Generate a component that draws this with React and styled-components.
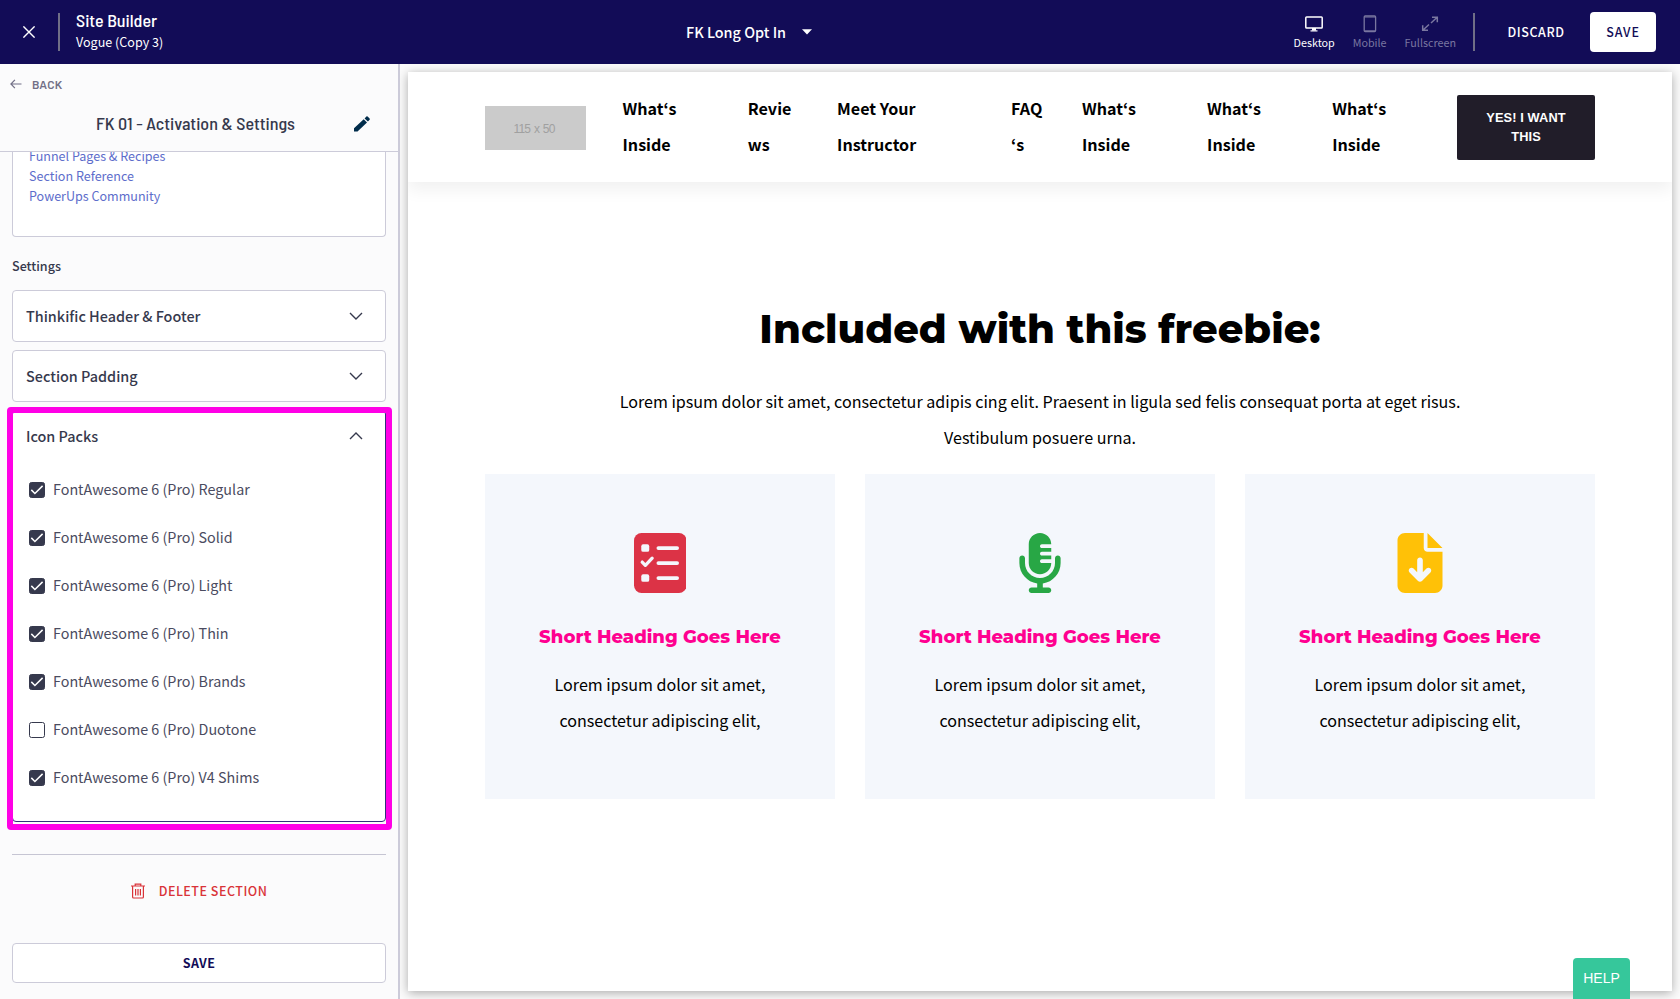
import React from "react";
import styled, { createGlobalStyle } from "styled-components";
import { FaMicrophoneLines, FaFileArrowDown } from "react-icons/fa6";

const sans = `"Noto Sans CJK KR", "Noto Sans", sans-serif`;
const condensed = `"Barlow", "Roboto", sans-serif`;
const semiCondensed = `"Barlow Semi Condensed", "Barlow", "Roboto", sans-serif`;
const display = `"Montserrat", "Inter", sans-serif`;

const GlobalStyle = createGlobalStyle`
  *, *::before, *::after { box-sizing: border-box; }
  body { margin: 0; overflow: hidden; font-family: ${sans}; color: #36394d; }
  button { font: inherit; border: 0; background: none; padding: 0; margin: 0; }
  h1, h2, h3, p, ul { margin: 0; padding: 0; }
  svg { display: block; flex: none; }
`;

const Page = styled.div`
  display: flex;
  flex-direction: column;
  width: 1680px;
  height: 999px;
  overflow: hidden;
  position: relative;
`;

/* ---------- top bar ---------- */
const TopBar = styled.header`
  height: 64px;
  flex: none;
  display: grid;
  grid-template-columns: 663px auto 1fr;
  align-items: center;
  background: #120c57;
  color: #fff;
  padding: 0 24px 0 23px;
`;
const TopLeft = styled.div`
  display: flex;
  align-items: center;
  gap: 23px;
`;
const Divider = styled.span`
  width: 2px;
  height: 38px;
  background: #706f87;
`;
const SiteName = styled.div`
  margin-left: -7px;
  padding-bottom: 3px;
  display: flex;
  flex-direction: column;
`;
const SiteTitle = styled.h1`
  font: 500 18px/20px ${semiCondensed};
  padding-bottom: 2px;
`;
const SiteCopy = styled.span`
  font-size: 12.55px;
  line-height: 20px;
`;
const PagePicker = styled.button`
  display: flex;
  align-items: center;
  gap: 16px;
  color: #fff;
  font-size: 14.4px;
  font-weight: 500;
  line-height: 24px;
`;
const TopRight = styled.div`
  display: flex;
  align-items: center;
  justify-content: flex-end;
`;
const DeviceTab = styled.button`
  display: flex;
  flex-direction: column;
  align-items: center;
  color: ${(p) => (p.$active ? "#fff" : "#7a77a0")};
  font-size: 10.75px;
  line-height: 16px;
  padding-top: 2px;
  margin-right: 18px;
  &:last-of-type { margin-right: 0; }
  svg { height: 18px; margin-bottom: 2px; }
`;
const DeviceTabs = styled.div`
  display: flex;
  margin-right: 17px;
`;
const BarButton = styled.button`
  height: 40px;
  padding-bottom: 1px;
  border-radius: 4px;
  font-size: 12.5px;
  font-weight: 500;
  letter-spacing: ${(p) => (p.$solid ? "0.9px" : "0.6px")};
  color: ${(p) => (p.$solid ? "#120c57" : "#fff")};
  background: ${(p) => (p.$solid ? "#fff" : "transparent")};
  width: ${(p) => (p.$solid ? "66px" : "58px")};
  margin-left: ${(p) => (p.$solid ? "25px" : "32px")};
`;

/* ---------- sidebar ---------- */
const Body = styled.div`
  display: flex;
  flex: 1;
  min-height: 0;
`;
const Sidebar = styled.aside`
  width: 400px;
  flex: none;
  display: flex;
  flex-direction: column;
  background: #fbfbfc;
  border-right: 2px solid #cccbd9;
  position: relative;
`;
const SideHead = styled.div`
  height: 88px;
  flex: none;
  border-bottom: 1px solid #cccbd9;
`;
const BackLink = styled.button`
  display: flex;
  align-items: center;
  gap: 10px;
  padding: 11px 0 0 10px;
  font: 600 12px/18px ${condensed};
  letter-spacing: 0.25px;
  color: #716f86;
`;
const SectionTitleRow = styled.div`
  display: flex;
  align-items: center;
  justify-content: space-between;
  padding: 19px 28px 0 96px;
`;
const SectionTitle = styled.h2`
  font: 500 18px/22px ${semiCondensed};
  padding-bottom: 2px;
  white-space: nowrap;
`;
const SideScroll = styled.div`
  flex: 1;
  min-height: 0;
  overflow: hidden;
  padding: 0 12px;
  display: flex;
  flex-direction: column;
`;
const LinkBox = styled.div`
  height: 85px;
  flex: none;
  background: #fff;
  border: 1px solid #cccbd9;
  border-top: 0;
  border-radius: 0 0 4px 4px;
  padding: 0 16px;
  overflow: hidden;
`;
const LinkList = styled.ul`
  list-style: none;
  margin-top: -6px;
`;
const LinkItem = styled.li`
  font-size: 12.55px;
  line-height: 20px;
  color: #5d6dcb;
`;
const GroupLabel = styled.h3`
  font-size: 12.55px;
  font-weight: 500;
  line-height: 20px;
  margin: 19px 0 14px;
`;
const Accordion = styled.section`
  flex: none;
  height: ${(p) => (p.$open ? "412px" : "52px")};
  background: #fff;
  border: 1px solid ${(p) => (p.$open ? "#312f7c" : "#cccbd9")};
  border-radius: 4px;
  margin-bottom: 8px;
`;
const AccordionHead = styled.div`
  height: 50px;
  display: flex;
  align-items: center;
  justify-content: space-between;
  padding: 0 22px 1px 13px;
  font-size: 14.4px;
  font-weight: 500;
`;
const CheckList = styled.div`
  padding: 5px 0 0 16px;
`;
const CheckRow = styled.label`
  height: 48px;
  display: flex;
  align-items: center;
  gap: 8px;
  font-size: 14.33px;
  color: #4a4b60;
`;
const CheckLabel = styled.span`
  line-height: 20px;
  padding-bottom: 3px;
`;
const CheckBox = styled.span`
  width: 16px;
  height: 16px;
  border-radius: 2.5px;
  border: 1px solid #36394d;
  background: ${(p) => (p.$checked ? "#36394d" : "#fff")};
  display: flex;
  align-items: center;
  justify-content: center;
`;
const Highlight = styled.div`
  position: absolute;
  left: 7px;
  top: 343px;
  width: 385px;
  height: 423px;
  border: 6px solid #ff00e6;
  border-radius: 4px;
  pointer-events: none;
`;
const Rule = styled.hr`
  flex: none;
  width: 100%;
  height: 1px;
  border: 0;
  margin: 24px 0 0;
  background: #c6c5d3;
`;
const DeleteButton = styled.button`
  display: flex;
  align-items: center;
  justify-content: center;
  gap: 14px;
  height: 40px;
  margin-top: 16px;
  padding-bottom: 1px;
  color: #d93338;
  font-size: 12.5px;
  font-weight: 500;
  letter-spacing: 0.5px;
`;
const SideSave = styled.button`
  flex: none;
  height: 40px;
  margin-top: 32px;
  padding-bottom: 1px;
  background: #fff;
  border: 1px solid #cccbd9;
  border-radius: 4px;
  color: #120c57;
  font-size: 12.5px;
  font-weight: 700;
  letter-spacing: 0.4px;
`;

/* ---------- preview ---------- */
const Stage = styled.main`
  flex: 1;
  padding: 8px;
  background: #fbfbfb;
  overflow: hidden;
`;
const Frame = styled.div`
  height: 919px;
  background: #fff;
  box-shadow: 0 2px 10px rgba(0, 0, 0, 0.32);
  color: #000;
`;
const SiteNav = styled.nav`
  height: 110px;
  display: flex;
  align-items: center;
  padding: 0 77px;
  background: #fff;
  box-shadow: 0 8px 16px rgba(0, 0, 0, 0.06);
  clip-path: inset(0 0 -30px 0);
`;
const LogoPlaceholder = styled.div`
  width: 101px;
  height: 44px;
  margin: 2px 36.5px 0 0;
  padding-right: 3px;
  background: #cbcbcb;
  color: #a0a0a0;
  font: 12px/47px "Liberation Sans", Arial, sans-serif;
  letter-spacing: -0.8px;
  word-spacing: 1.2px;
  text-align: center;
`;
const NavItem = styled.a`
  width: ${(p) => p.$w}px;
  padding-bottom: 2px;
  font-size: 16.1px;
  font-weight: 700;
  line-height: 36px;
  white-space: pre;
`;
const CallToAction = styled.button`
  width: 138px;
  height: 65px;
  margin-left: auto;
  border-radius: 2px;
  background: #211d29;
  color: #fff;
  font: 700 12.8px/19px "Liberation Sans", Arial, sans-serif;
  letter-spacing: 0.1px;
`;
const Hero = styled.section`
  padding: 123px 77px 0;
  text-align: center;
`;
const HeroTitle = styled.h1`
  font: 800 40px/48px ${display};
  white-space: nowrap;
`;
const BodyText = styled.p`
  font-size: 16.1px;
  line-height: 36px;
  white-space: pre-line;
`;
const Intro = styled(BodyText)`
  margin: 30px 0 19px;
`;
const Cards = styled.div`
  display: grid;
  grid-template-columns: repeat(3, 350px);
  gap: 30px;
`;
const Card = styled.article`
  height: 325px;
  padding-top: 59.4px;
  background: #f4f7fc;
  display: flex;
  flex-direction: column;
  align-items: center;
`;
const CardIcon = styled.div`
  height: 60px;
  color: ${(p) => p.$color};
  svg { height: 60px; width: auto; }
`;
const CardTitle = styled.h2`
  font: 800 18px/24px ${display};
  color: #ff0090;
  margin: 31.6px 0 17px;
`;
const HelpTab = styled.button`
  position: absolute;
  right: 50px;
  bottom: 0;
  width: 57px;
  height: 41px;
  border-radius: 4px 4px 0 0;
  background: #36c79b;
  color: #fff;
  font: 14px/39px "Liberation Sans", Arial, sans-serif;
`;

/* ---------- icons ---------- */
const CloseIcon = () => (
  <svg width="12" height="12" viewBox="0 0 12 12" fill="none" stroke="#fff" strokeWidth="1.4">
    <path d="M.4.4l11.2 11.2M11.6.4L.4 11.6" />
  </svg>
);
const CaretIcon = () => (
  <svg width="10" height="6" viewBox="0 0 10 6" fill="#fff">
    <path d="M0 .3h10L5 5.6z" />
  </svg>
);
const DesktopIcon = () => (
  <svg width="18" height="18" viewBox="0 0 18 18" fill="none" stroke="currentColor">
    <rect x=".8" y="2" width="16.4" height="11" rx=".8" strokeWidth="1.5" />
    <path d="M9 13v2.6" strokeWidth="4" />
    <path d="M5.5 15.9h7" strokeWidth="1.2" />
  </svg>
);
const MobileIcon = () => (
  <svg width="14" height="18" viewBox="0 0 14 18" fill="none" stroke="currentColor">
    <rect x="1.2" y="1" width="11.4" height="15.6" rx="1" strokeWidth="1.3" />
    <path d="M1.5 2.1h11M1.5 15.7h11" strokeWidth=".9" />
  </svg>
);
const FullscreenIcon = () => (
  <svg width="18" height="18" viewBox="0 0 18 18" fill="none" stroke="currentColor" strokeWidth="1.5">
    <path d="M11 2.2h5.3v5M16.2 2.3L10 8M7 15.3H1.7v-5M1.8 15.2L8 9.5" />
  </svg>
);
const BackIcon = () => (
  <svg width="12" height="10" viewBox="0 0 12 10" fill="none" stroke="#716f86" strokeWidth="1.2">
    <path d="M.8 5H11.5M4.9.8L.9 5l4 4.2" />
  </svg>
);
const PencilIcon = () => (
  <svg width="16" height="16" viewBox="0 0 16 16" fill="#002c4b">
    <path d="M0 12.2L9.7 3.2 13 6.4 3.5 15.6H0zM10.6 2.4L12.4.6q.6-.6 1.2 0l2 2q.5.6 0 1.2L13.9 5.5z" />
  </svg>
);
const Chevron = ({ up }) => (
  <svg width="14" height="8" viewBox="0 0 14 8" fill="none" stroke="#36394d" strokeWidth="1.4">
    <path d={up ? "M1 7l6-6 6 6" : "M1 1l6 6 6-6"} />
  </svg>
);
const CheckIcon = () => (
  <svg width="14" height="14" viewBox="0 0 14 14" fill="none" stroke="#fff" strokeWidth="1.5">
    <path d="M1.3 6.9l3.6 3.6 7.7-7.6" />
  </svg>
);
const TrashIcon = () => (
  <svg width="14" height="16" viewBox="0 0 14 16" fill="none" stroke="#d93338" strokeWidth="1.2">
    <path d="M0 3h14M4.2 3V1.2h5.6V3M1.6 3v11q0 1 1 1h8.8q1 0 1-1V3M4.6 6v6.4M7 6v6.4M9.4 6v6.4" />
  </svg>
);
const ChecklistIcon = () => (
  <svg viewBox="0 0 448 512">
    <rect width="448" height="512" rx="64" fill="currentColor" />
    <g fill="#f4f7fc">
      <rect x="62" y="97" width="68" height="64" rx="16" />
      <rect x="62" y="352" width="68" height="64" rx="16" />
      <rect x="192" y="112" width="192" height="32" rx="16" />
      <rect x="192" y="240" width="192" height="32" rx="16" />
      <rect x="192" y="368" width="192" height="32" rx="16" />
    </g>
    <path d="M70 248l27 28 58-61" fill="none" stroke="#f4f7fc" strokeWidth="28" strokeLinecap="round" strokeLinejoin="round" />
  </svg>
);

/* ---------- data ---------- */
const links = ["Funnel Pages & Recipes", "Section Reference", "PowerUps Community"];
const packs = [
  ["Regular", true],
  ["Solid", true],
  ["Light", true],
  ["Thin", true],
  ["Brands", true],
  ["Duotone", false],
  ["V4 Shims", true],
];
const navItems = [
  ["What‘s\nInside", 125.3],
  ["Revie\nws", 89.3],
  ["Meet Your\nInstructor", 174],
  ["FAQ\n‘s", 70.9],
  ["What‘s\nInside", 125.1],
  ["What‘s\nInside", 125.1],
  ["What‘s\nInside", 110],
];
const cards = [
  [ChecklistIcon, "#dc3346"],
  [FaMicrophoneLines, "#28a745"],
  [FaFileArrowDown, "#ffc107"],
];

export default function App() {
  return (
    <Page>
      <GlobalStyle />
      <TopBar>
        <TopLeft>
          <CloseIcon />
          <Divider />
          <SiteName>
            <SiteTitle>Site Builder</SiteTitle>
            <SiteCopy>Vogue (Copy 3)</SiteCopy>
          </SiteName>
        </TopLeft>
        <PagePicker>
          FK Long Opt In
          <CaretIcon />
        </PagePicker>
        <TopRight>
          <DeviceTabs>
            <DeviceTab $active><DesktopIcon />Desktop</DeviceTab>
            <DeviceTab><MobileIcon />Mobile</DeviceTab>
            <DeviceTab><FullscreenIcon />Fullscreen</DeviceTab>
          </DeviceTabs>
          <Divider />
          <BarButton>DISCARD</BarButton>
          <BarButton $solid>SAVE</BarButton>
        </TopRight>
      </TopBar>
      <Body>
        <Sidebar>
          <SideHead>
            <BackLink><BackIcon />BACK</BackLink>
            <SectionTitleRow>
              <SectionTitle>FK 01 - Activation &amp; Settings</SectionTitle>
              <PencilIcon />
            </SectionTitleRow>
          </SideHead>
          <SideScroll>
            <LinkBox>
              <LinkList>
                {links.map((l) => <LinkItem key={l}>{l}</LinkItem>)}
              </LinkList>
            </LinkBox>
            <GroupLabel>Settings</GroupLabel>
            <Accordion>
              <AccordionHead>Thinkific Header &amp; Footer<Chevron /></AccordionHead>
            </Accordion>
            <Accordion>
              <AccordionHead>Section Padding<Chevron /></AccordionHead>
            </Accordion>
            <Accordion $open>
              <AccordionHead>Icon Packs<Chevron up /></AccordionHead>
              <CheckList>
                {packs.map(([name, on]) => (
                  <CheckRow key={name}>
                    <CheckBox $checked={on}>{on && <CheckIcon />}</CheckBox>
                    <CheckLabel>FontAwesome 6 (Pro) {name}</CheckLabel>
                  </CheckRow>
                ))}
              </CheckList>
            </Accordion>
            <Rule />
            <DeleteButton><TrashIcon />DELETE SECTION</DeleteButton>
            <SideSave>SAVE</SideSave>
          </SideScroll>
          <Highlight />
        </Sidebar>
        <Stage>
          <Frame>
            <SiteNav>
              <LogoPlaceholder>115 x 50</LogoPlaceholder>
              {navItems.map(([text, w], i) => <NavItem key={i} $w={w}>{text}</NavItem>)}
              <CallToAction>YES! I WANT<br />THIS</CallToAction>
            </SiteNav>
            <Hero>
              <HeroTitle>Included with this freebie:</HeroTitle>
              <Intro>
                {"Lorem ipsum dolor sit amet, consectetur adipis cing elit. Praesent in ligula sed felis consequat porta at eget risus.\nVestibulum posuere urna."}
              </Intro>
              <Cards>
                {cards.map(([Icon, color]) => (
                  <Card key={color}>
                    <CardIcon $color={color}><Icon /></CardIcon>
                    <CardTitle>Short Heading Goes Here</CardTitle>
                    <BodyText>{"Lorem ipsum dolor sit amet,\nconsectetur adipiscing elit,"}</BodyText>
                  </Card>
                ))}
              </Cards>
            </Hero>
          </Frame>
        </Stage>
      </Body>
      <HelpTab>HELP</HelpTab>
    </Page>
  );
}
